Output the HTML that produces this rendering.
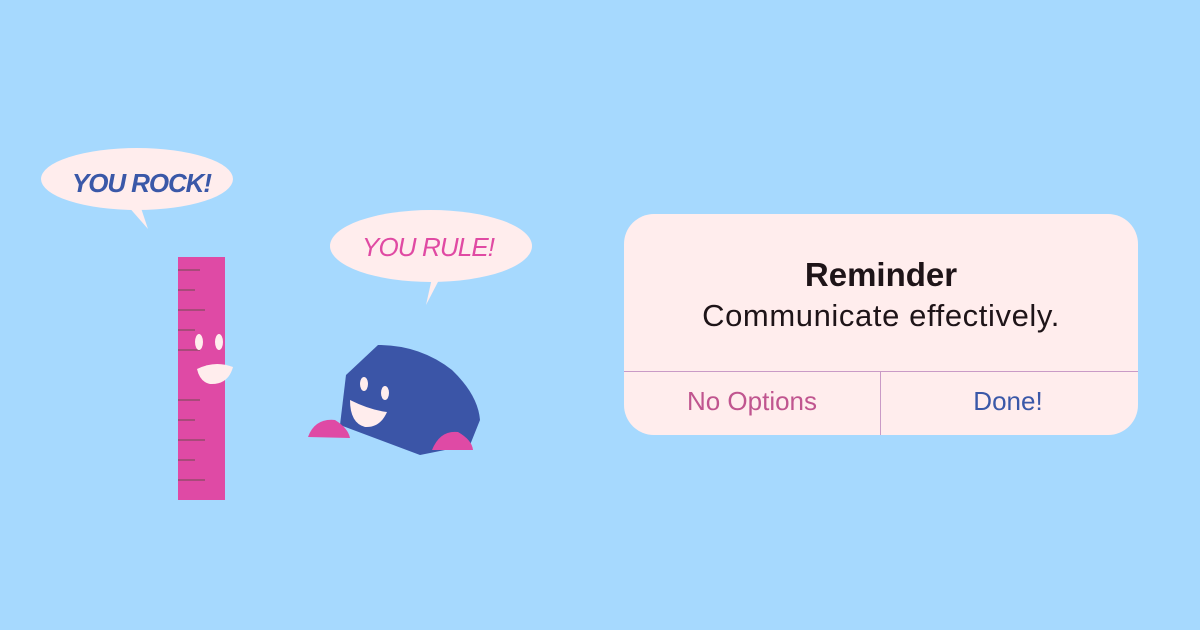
<!DOCTYPE html>
<html><head><style>
body{margin:0;width:1200px;height:630px;background:#a6d9fe;overflow:hidden;font-family:"Liberation Sans",sans-serif;position:relative}
.card{position:absolute;left:624px;top:214px;width:514px;height:221px;background:#ffeded;border-radius:30px;overflow:hidden}
.t{position:absolute;left:0;width:100%;text-align:center;color:#1e1418}
.hl{position:absolute;left:0;top:157px;width:100%;height:1px;background:#c99ac6}
.vl{position:absolute;left:256px;top:157px;width:1px;height:64px;background:#c99ac6}
.b{position:absolute;top:172px;font-size:26px;text-align:center;width:256px}
</style></head><body>
<svg width="620" height="630" style="position:absolute;left:0;top:0">
<ellipse cx="137" cy="179" rx="96" ry="31" fill="#ffeded"/>
<path d="M127 205 L148 229 L140 205Z" fill="#ffeded"/>
<text x="72" y="192" font-family="Liberation Sans" font-style="italic" font-weight="bold" font-size="26" fill="#3a58a8" textLength="140" lengthAdjust="spacing">YOU ROCK!</text>
<ellipse cx="431" cy="246" rx="101" ry="36" fill="#ffeded"/>
<path d="M432 278 L426 305 L440 278Z" fill="#ffeded"/>
<text x="362" y="256" font-family="Liberation Sans" font-style="italic" font-size="26" fill="#e04aa3" textLength="133" lengthAdjust="spacing">YOU RULE!</text>
<rect x="178" y="257" width="47" height="243" fill="#df4aa5"/>
<g stroke="#a84a7a" stroke-width="2">
<line x1="178" y1="270" x2="200" y2="270"/><line x1="178" y1="290" x2="195" y2="290"/><line x1="178" y1="310" x2="205" y2="310"/><line x1="178" y1="330" x2="195" y2="330"/><line x1="178" y1="350" x2="200" y2="350"/><line x1="178" y1="400" x2="200" y2="400"/><line x1="178" y1="420" x2="195" y2="420"/><line x1="178" y1="440" x2="205" y2="440"/><line x1="178" y1="460" x2="195" y2="460"/><line x1="178" y1="480" x2="205" y2="480"/>
</g>
<ellipse cx="199" cy="342" rx="4" ry="8" fill="#ffeded"/><ellipse cx="219" cy="342" rx="4" ry="8" fill="#ffeded"/>
<path d="M197 369 Q215 360 233 367 Q228 385 210 384 Q200 382 197 369Z" fill="#ffeded"/>
<path d="M346 375 L378 345 Q420 345 452 370 Q478 395 480 420 L470 445 L420 455 L340 425 Z" fill="#3b55a7"/>
<ellipse cx="364" cy="384" rx="4" ry="7" fill="#ffeded"/><ellipse cx="385" cy="393" rx="4" ry="7" fill="#ffeded"/>
<path d="M350 400 Q370 410 387 412 Q380 428 365 427 Q350 423 350 400Z" fill="#ffeded"/>
<path d="M308 437 Q315 418 335 420 Q348 428 350 438 Z" fill="#df4aa5"/>
<path d="M432 450 Q440 430 458 432 Q472 440 473 450 Z" fill="#df4aa5"/>
</svg>
<div class="card">
<div class="t" style="top:42px;font-size:33px;font-weight:bold">Reminder</div>
<div class="t" style="top:84px;font-size:31px;letter-spacing:0.6px">Communicate effectively.</div>
<div class="hl"></div><div class="vl"></div>
<div class="b" style="left:0;color:#c0558f">No Options</div>
<div class="b" style="left:256px;color:#3a58a8">Done!</div>
</div>
</body></html>
